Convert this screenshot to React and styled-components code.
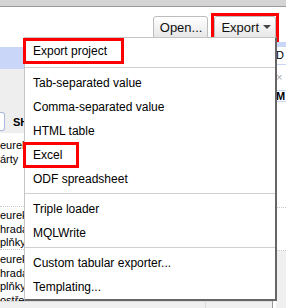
import React from 'react';
import styled, { createGlobalStyle } from 'styled-components';

const Global = createGlobalStyle`
  html, body {
    margin: 0;
    padding: 0;
    background: #fff;
  }
`;

const Page = styled.div`
  position: relative;
  width: 286px;
  height: 308px;
  overflow: hidden;
  background: #fff;
  font-family: "Liberation Sans", Arial, sans-serif;
  color: #000;
`;

const TopStrip = styled.div`
  height: 6px;
  background: #d4d4d4;
  border-bottom: 1px solid #9a9a9a;
`;

const Toolbar = styled.div`
  height: 40px;
  display: flex;
  align-items: center;
  justify-content: flex-end;
  gap: 3px;
  padding-right: 7px;
`;

const Button = styled.button`
  display: inline-flex;
  align-items: center;
  gap: 4px;
  height: 23px;
  margin: 0;
  padding: ${(p) => (p.$menu ? '0 4px 0 6px' : '0 5px 0 6px')};
  border: 1px solid #bdbdbd;
  border-radius: 3px;
  background: linear-gradient(#ffffff, #e6e6e6);
  font-family: inherit;
  font-size: 13px;
  color: #111;
`;

const Caret = styled.span`
  width: 0;
  height: 0;
  border-left: 4px solid transparent;
  border-right: 4px solid transparent;
  border-top: 4px solid #444;
`;

const Callout = styled.div`
  display: flex;
  border: 3px solid #ff0000;
`;

const Sheet = styled.div`
  display: flex;
  height: 261px;
`;

const LeftPane = styled.div`
  flex: 1;
  display: flex;
  flex-direction: column;
  overflow: hidden;
`;

const HeaderBand = styled.div`
  height: 22px;
  background: #c9d6f7;
`;

const FilterRow = styled.div`
  height: 64px;
  background: #eeeeee;
  display: flex;
  align-items: flex-end;
  gap: 8px;
  padding-bottom: 2px;
  box-sizing: border-box;
`;

const FilterInput = styled.div`
  width: 4px;
  height: 17px;
  background: #fff;
  border: 1px solid #a8b8de;
  border-left: none;
  border-radius: 0 3px 3px 0;
`;

const FilterLabel = styled.span`
  font-size: 11px;
  font-weight: bold;
  line-height: 17px;
`;

const DataRow = styled.div`
  height: ${(p) => p.$h}px;
  padding-top: ${(p) => p.$pad}px;
  box-sizing: border-box;
  border-bottom: 1px dotted #c8c8c8;
  font-size: 11px;
  line-height: 13.5px;
  white-space: nowrap;
`;

const Footer = styled.div`
  flex: 1;
  background: #f0f0f0;
  border-top: 1px solid #dcdcdc;
  display: flex;
`;

const FooterCell = styled.div`
  width: 205px;
  border-right: 1px solid #dcdcdc;
`;

const RightPane = styled.div`
  width: 14px;
  margin-top: -5px;
  display: flex;
  flex-direction: column;
  border-left: 1px solid #999;
  padding-left: 3px;
  box-sizing: border-box;
  font-size: 11px;
  overflow: hidden;
`;

const RightBand = styled.div`
  height: 5px;
  background: #c9d6f7;
`;

const RightCell = styled.div`
  height: ${(p) => p.$h}px;
  line-height: ${(p) => p.$h}px;
  border-bottom: 1px solid #c9d6f7;
  font-weight: ${(p) => (p.$bold ? 'bold' : 'normal')};
  color: ${(p) => (p.$faint ? '#aaa' : '#000')};
`;

const RightBlank = styled.div`
  height: ${(p) => p.$h}px;
  border-bottom: 1px dotted #c8c8c8;
`;

const RightRest = styled.div`
  flex: 1;
  background: #f0f0f0;
`;

const Menu = styled.div`
  position: absolute;
  left: 24px;
  top: 37px;
  width: 253px;
  box-sizing: border-box;
  background: #fff;
  border: 1px solid #c4c4c4;
  border-right: 2px solid #666;
  border-bottom: 2px solid #666;
  font-size: 12px;
`;

const Item = styled.div`
  height: ${(p) => (p.$tall ? 26 : 24)}px;
  display: flex;
  align-items: center;
`;

const Label = styled.span`
  display: inline-flex;
  align-items: center;
  height: 26px;
  flex-shrink: 0;
  box-sizing: border-box;
  margin-left: -2px;
  padding: 0 14px 0 7px;
  border: 3px solid ${(p) => (p.$marked ? '#ff0000' : 'transparent')};
  white-space: nowrap;
`;

const Divider = styled.div`
  height: 1px;
  background: #cfcfcf;
  margin: ${(p) => p.$top}px 0 3px;
`;

const groups = [
  [{ text: 'Export project', marked: true, tall: true }],
  [
    { text: 'Tab-separated value' },
    { text: 'Comma-separated value' },
    { text: 'HTML table' },
    { text: 'Excel', marked: true },
    { text: 'ODF spreadsheet' },
  ],
  [{ text: 'Triple loader' }, { text: 'MQLWrite' }],
  [{ text: 'Custom tabular exporter...' }, { text: 'Templating...' }],
];

export default function App() {
  return (
    <Page>
      <Global />
      <TopStrip />
      <Toolbar>
        <Button>Open...</Button>
        <Callout>
          <Button $menu>
            Export
            <Caret />
          </Button>
        </Callout>
      </Toolbar>
      <Sheet>
        <LeftPane>
          <HeaderBand />
          <FilterRow>
            <FilterInput />
            <FilterLabel>SH</FilterLabel>
          </FilterRow>
          <DataRow $h={74} $pad={6}>
            <div>eurek</div>
            <div>árty</div>
          </DataRow>
          <DataRow $h={43} $pad={2}>
            <div>eurek</div>
            <div>hrada</div>
            <div>plňky</div>
          </DataRow>
          <DataRow $h={51} $pad={3}>
            <div>eurek</div>
            <div>hrada</div>
            <div>plňky</div>
            <div>ostřeuty ▾</div>
          </DataRow>
          <Footer>
            <FooterCell />
          </Footer>
        </LeftPane>
        <RightPane>
          <RightBand />
          <RightCell $h={17}>D</RightCell>
          <RightCell $h={25} $faint>×</RightCell>
          <RightCell $h={10} $bold>M</RightCell>
          <RightBlank $h={105} />
          <RightBlank $h={42} />
          <RightRest />
        </RightPane>
      </Sheet>
      <Menu>
        {groups.map((group, gi) => (
          <React.Fragment key={gi}>
            {gi > 0 && <Divider $top={gi === 1 ? 3 : 2} />}
            {group.map((it) => (
              <Item key={it.text} $tall={it.tall}>
                <Label $marked={it.marked}>{it.text}</Label>
              </Item>
            ))}
          </React.Fragment>
        ))}
      </Menu>
    </Page>
  );
}
